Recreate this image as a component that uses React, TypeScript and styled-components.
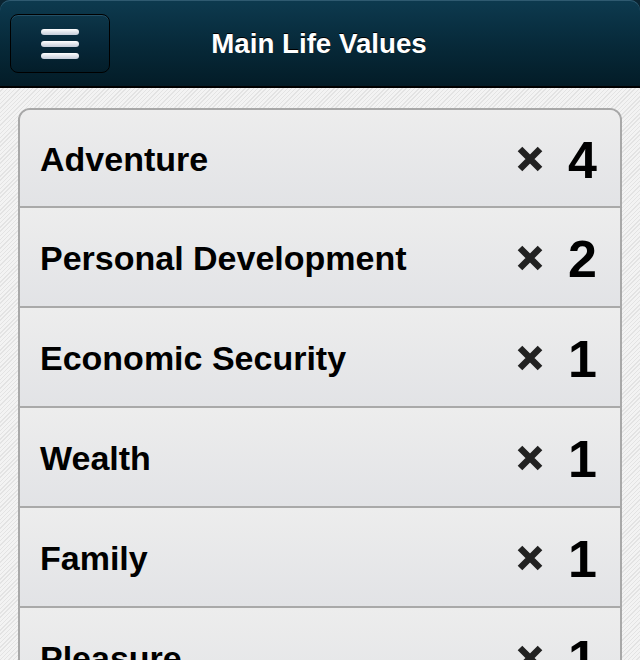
import React from "react";
import styled, { createGlobalStyle } from "styled-components";

const GlobalStyle = createGlobalStyle`
  html, body {
    margin: 0;
    padding: 0;
    background: #0b2431;
  }
  #root {
    width: 640px;
    height: 660px;
    overflow: hidden;
  }
`;

const Page = styled.div`
  width: 640px;
  height: 660px;
  overflow: hidden;
  display: flex;
  flex-direction: column;
  font-family: "Liberation Sans", Arial, Helvetica, sans-serif;
  background: #0b2431;
`;

const Header = styled.header`
  position: relative;
  flex: 0 0 auto;
  height: 86px;
  border-radius: 10px 10px 0 0;
  border-bottom: 2px solid #000;
  background: linear-gradient(#0d3a4f 0%, #072a3a 50%, #031c27 100%);
  box-shadow: inset 0 1px 0 #2f5a70;
  display: flex;
  align-items: center;
  justify-content: center;
`;

const MenuButton = styled.button`
  position: absolute;
  left: 10px;
  top: 14px;
  width: 100px;
  height: 59px;
  box-sizing: border-box;
  border: 1px solid #000;
  border-radius: 8px;
  background: linear-gradient(#0d3649 0%, #062738 55%, #031d29 100%);
  box-shadow: inset 0 1px 0 #245066;
  display: flex;
  flex-direction: column;
  align-items: center;
  justify-content: center;
  gap: 6px;
  padding: 0;
`;

const Bar = styled.span`
  display: block;
  width: 38px;
  height: 6px;
  border-radius: 3px;
  background: linear-gradient(#ffffff, #c3cbd8);
`;

const Title = styled.h1`
  margin: 0;
  margin-left: -2px;
  margin-top: 2px;
  color: #fff;
  font-size: 27.7px;
  font-weight: 700;
  text-shadow: 0 -1px 0 #000;
`;

const Content = styled.main`
  flex: 1 1 auto;
  background: repeating-linear-gradient(135deg, #f3f3f3 0 2px, #e3e3e3 2px 3px);
  padding: 20px 18px 0 18px;
`;

const Card = styled.ul`
  list-style: none;
  margin: 0;
  padding: 0;
  border: 2px solid #a8a8a8;
  border-radius: 12px;
  overflow: hidden;
  background: #e8e8e9;
`;

const Row = styled.li`
  height: 100px;
  box-sizing: border-box;
  display: flex;
  align-items: center;
  padding: 3px 23px 0 20px;
  background: linear-gradient(#ededed 0%, #e2e3e6 100%);
  border-top: 2px solid #a9a9a9;
  &:first-child {
    border-top: none;
    height: 96px;
  }
`;

const Label = styled.span`
  flex: 1 1 auto;
  color: #000;
  font-size: 34px;
  font-weight: 700;
  white-space: nowrap;
`;

const Remove = styled.span`
  display: flex;
  width: 28px;
  height: 26px;
  margin-right: 24px;
  margin-top: -1px;
`;

const Count = styled.span`
  width: 29px;
  text-align: right;
  color: #000;
  font-size: 52px;
  font-weight: 700;
  line-height: 1;
  margin-top: 1px;
`;

const XIcon = () => (
  <svg width="28" height="26" viewBox="0 0 28 26">
    <path
      d="M4 3 L24 23 M24 3 L4 23"
      stroke="#222"
      strokeWidth="6.5"
      strokeLinecap="butt"
      fill="none"
    />
  </svg>
);

const values: { name: string; count: number }[] = [
  { name: "Adventure", count: 4 },
  { name: "Personal Development", count: 2 },
  { name: "Economic Security", count: 1 },
  { name: "Wealth", count: 1 },
  { name: "Family", count: 1 },
  { name: "Pleasure", count: 1 },
];

export default function App() {
  return (
    <Page>
      <GlobalStyle />
      <Header>
        <MenuButton aria-label="Menu">
          <Bar />
          <Bar />
          <Bar />
        </MenuButton>
        <Title>Main Life Values</Title>
      </Header>
      <Content>
        <Card>
          {values.map((v) => (
            <Row key={v.name}>
              <Label>{v.name}</Label>
              <Remove>
                <XIcon />
              </Remove>
              <Count>{v.count}</Count>
            </Row>
          ))}
        </Card>
      </Content>
    </Page>
  );
}
